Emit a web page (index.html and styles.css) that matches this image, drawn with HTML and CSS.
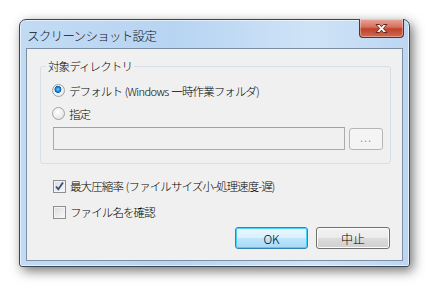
FILE: index.html
```html
<!DOCTYPE html>
<html lang="ja">
<head>
  <meta charset="UTF-8" />
  <title>スクリーンショット設定</title>
  <link rel="stylesheet" href="styles.css">
</head>
<body>
  <div class="window">
    <div class="titlebar">
      <span class="title">スクリーンショット設定</span>
      <button class="close" title="閉じる">
        <svg width="17" height="11" viewBox="0 0 17 11">
          <path d="M3 1.5h3.5l2 2.3 2-2.3h3.5l-3.7 4 3.7 4h-3.5l-2-2.3-2 2.3h-3.5l3.7-4z" fill="#fff" stroke="#5a2a25" stroke-width="1" stroke-linejoin="round"/>
        </svg>
      </button>
    </div>

    <div class="client">
      <div class="group">
        <span class="group-label">対象ディレクトリ</span>
        <label class="row">
          <span class="radio checked"></span>
          <span>デフォルト <span class="latin">(Windows</span> 一時作業フォルダ<span class="latin">)</span></span>
        </label>
        <label class="row">
          <span class="radio"></span>
          <span>指定</span>
        </label>
        <div class="path-row">
          <div class="field"></div>
          <button class="browse">...</button>
        </div>
      </div>

      <label class="row check-row">
        <span class="checkbox">
          <svg width="11" height="11" viewBox="0 0 11 11">
            <path d="M2 5.5l2.3 2.8L9 1.5" fill="none" stroke="#3b4f7c" stroke-width="1.8"/>
          </svg>
        </span>
        <span>最大圧縮率 <span class="latin">(</span>ファイルサイズ小-処理速度-遅<span class="latin">)</span></span>
      </label>
      <label class="row check-row">
        <span class="checkbox"></span>
        <span>ファイル名を確認</span>
      </label>

      <div class="actions">
        <button class="btn default">OK</button>
        <button class="btn">中止</button>
      </div>
    </div>
  </div>
</body>
</html>
```

FILE: styles.css
```css
body {
  margin: 0;
  padding: 19px;
  background: #ffffff;
  font-family: "Noto Sans CJK JP", "Noto Sans", sans-serif;
  font-size: 11.5px;
  font-weight: 300;
  letter-spacing: -0.9px;
  word-spacing: 1px;
  color: #000;
}

.latin {
  font-size: 11px;
  letter-spacing: -0.6px;
}

.window {
  width: 391px;
  height: 248px;
  box-sizing: border-box;
  border: 1px solid #3d4650;
  border-radius: 7px 7px 3px 3px;
  background: linear-gradient(to right, #c2dbf4 0%, #b7d4f2 40%, #cfe3f7 75%, #bcd6f2 100%);
  box-shadow: 3px 4px 12px rgba(0, 0, 0, 0.55), inset 0 0 0 1px rgba(255, 255, 255, 0.6);
  padding: 0 6px 5px;
  display: flex;
  flex-direction: column;
}

.titlebar {
  height: 28px;
  display: flex;
  align-items: flex-start;
  justify-content: space-between;
}

.title {
  margin: 6px 0 0 1px;
  font-size: 12.5px;
  letter-spacing: -0.7px;
  color: #111;
}

.close {
  width: 45px;
  height: 19px;
  margin: -1px -1px 0 0;
  padding: 0;
  border: 1px solid #6b2a22;
  border-top: none;
  border-radius: 0 0 4px 4px;
  background: linear-gradient(to bottom, #e9a89a 0%, #d5705e 45%, #c0412b 55%, #cf6a4f 100%);
  box-shadow: inset 0 0 0 1px rgba(255, 255, 255, 0.35);
  display: flex;
  align-items: center;
  justify-content: center;
}

.client {
  flex: 1;
  border: 1px solid #7c8fa4;
  background: #f0f0f0;
  padding: 17px 11px 11px 13px;
  display: flex;
  flex-direction: column;
}

.group {
  position: relative;
  border: 1px solid #d5dfe5;
  border-radius: 3px;
  padding: 12px 6px 13px 11px;
}

.group-label {
  position: absolute;
  top: -9px;
  left: 5px;
  padding: 0 2px;
  background: #f0f0f0;
}

.row {
  display: flex;
  align-items: center;
  height: 23px;
  gap: 4px;
}

.radio {
  width: 11px;
  height: 11px;
  border: 1px solid #a2a2a2;
  border-radius: 50%;
  background: radial-gradient(circle at 40% 35%, #ffffff 0%, #ececec 60%, #d4d4d4 100%);
}

.radio.checked {
  background: radial-gradient(circle at 45% 40%, #8fd0ff 0%, #1f8ce0 22%, #0b5fa8 36%, #f4f4f4 42%, #e0e0e0 100%);
}

.path-row {
  display: flex;
  gap: 4px;
  margin-top: 2px;
  padding-left: 1px;
}

.field {
  width: 290px;
  height: 21px;
  border: 1px solid #ababab;
  border-top-color: #a0a0a0;
  background: #f0f0f0;
}

.browse {
  width: 34px;
  height: 22px;
  margin-top: 1px;
  padding: 0 0 6px;
  border: 1px solid #b5b5b5;
  border-radius: 3px;
  background: #f4f4f4;
  color: #9a9a9a;
  font-family: inherit;
  font-size: 11px;
  letter-spacing: 1px;
}

.check-row {
  height: 26px;
  margin-left: 13px;
}

.check-row:first-of-type {
  margin-top: 9px;
}

.checkbox {
  width: 11px;
  height: 11px;
  border: 1px solid #8e8f8f;
  background: linear-gradient(135deg, #dcdcdc, #f8f8f8);
  box-shadow: inset 0 0 0 1px #f4f4f4;
  display: flex;
  align-items: center;
  justify-content: center;
}

.actions {
  display: flex;
  justify-content: flex-end;
  gap: 8px;
  margin-top: 2px;
  padding-right: 1px;
}

.btn {
  width: 74px;
  height: 22px;
  padding: 0;
  border: 1px solid #707070;
  border-radius: 3px;
  background: linear-gradient(to bottom, #f2f2f2 0%, #ebebeb 50%, #dddddd 51%, #cfcfcf 100%);
  box-shadow: inset 0 0 0 1px #fcfcfc;
  font-family: inherit;
  font-size: 12px;
  font-weight: 300;
  letter-spacing: 0;
  color: #000;
}

.btn.default {
  width: 73px;
  border-color: #3c7fb1;
  background: linear-gradient(to bottom, #eaf6fd 0%, #d9f0fc 50%, #bee6fd 51%, #a7d9f5 100%);
  box-shadow: inset 0 0 0 1px #48d2fc;
}
```
